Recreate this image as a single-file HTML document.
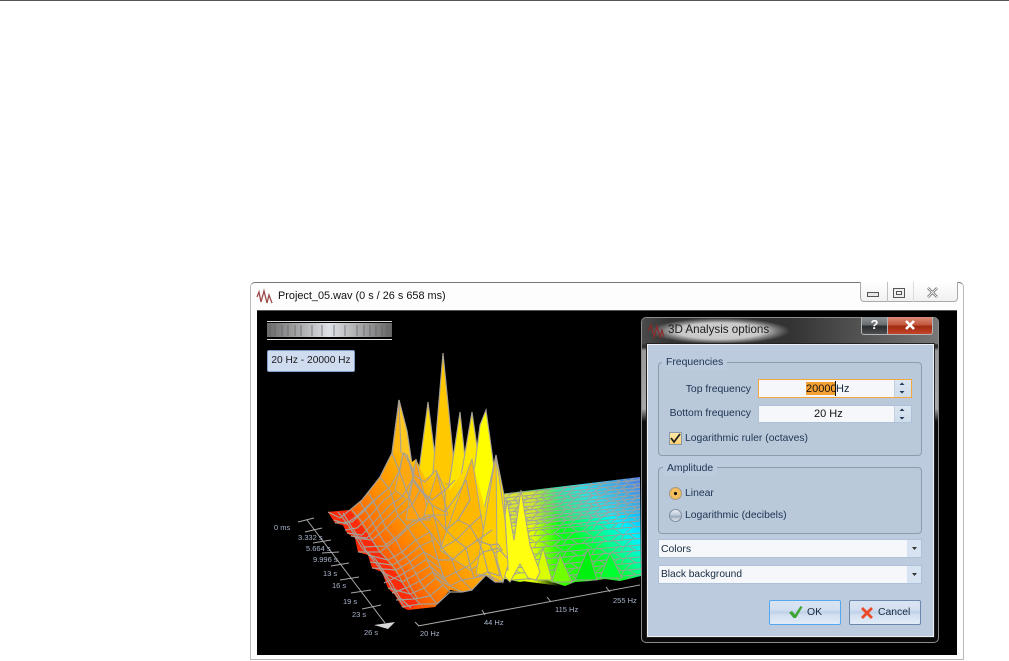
<!DOCTYPE html>
<html><head><meta charset="utf-8">
<style>
html,body{margin:0;padding:0;background:#fff;width:1009px;height:661px;overflow:hidden}
body{position:relative;font-family:"Liberation Sans",sans-serif;font-size:10.4px;color:#15283f}
div{position:absolute;box-sizing:border-box;white-space:nowrap}
.t{line-height:14px;height:14px}
.grp{border:1px solid #8c9cb0;border-radius:4px;background:#bac9da}
.lg{background:#bccbdd;padding:0 4px;color:#1c3350}
.inp{background:#f5f7fa;border:1px solid #afc1d8}
.spn{background:linear-gradient(#dbe6f2,#cfdcea);border-left:1px solid #c3d0e0}
.cmbb{background:#d7e3f0}
.btn{border-radius:2px;background:linear-gradient(#d9e4f3 0,#d4e0f0 35%,#bfd1e7 50%,#d2dff0 60%,#e3ecf8 100%)}
svg{position:absolute;left:0;top:0}
</style></head><body>
<div style="left:0;top:0;width:1009px;height:1px;background:#555"></div>

<!-- main window -->
<div style="left:250px;top:282px;width:714px;height:378px;background:#fdfdfe;border:1px solid #b9b9b9;border-top:1px solid #777;border-radius:5px 5px 0 0"></div>
<div style="left:257px;top:310px;width:700px;height:345px;background:#000;border-top:1px solid #555"></div>
<div class="t" style="left:278px;top:289px;font-size:10.9px;color:#111">Project_05.wav (0 s / 26 s 658 ms)</div>

<!-- caption buttons -->
<div style="left:860px;top:282px;width:98px;height:20px;background:linear-gradient(#fff,#f1f1f1);border:1px solid #a9a9a9;border-top:0;border-radius:0 0 4px 4px"></div>
<div style="left:887px;top:282px;width:1px;height:20px;background:#c0c0c0"></div>
<div style="left:913px;top:282px;width:1px;height:20px;background:#dcdcdc"></div>
<div style="left:867px;top:292px;width:12px;height:5px;border:1px solid #555;background:#e8e8e8"></div>
<div style="left:893px;top:288px;width:12px;height:10px;border:1px solid #555;background:#eee"></div>
<div style="left:896px;top:291px;width:6px;height:4px;border:1px solid #555"></div>

<svg width="1009" height="661" viewBox="0 0 1009 661" style="z-index:1">
<defs>
<linearGradient id="body" gradientUnits="userSpaceOnUse" x1="358" y1="561" x2="470" y2="472">
<stop offset="0" stop-color="#ff2408"/><stop offset=".08" stop-color="#ff4000"/><stop offset=".24" stop-color="#ff7000"/><stop offset=".42" stop-color="#ff9000"/><stop offset=".6" stop-color="#ffa800"/><stop offset=".75" stop-color="#ffc000"/><stop offset="1" stop-color="#ffe000"/></linearGradient>
<linearGradient id="band" gradientUnits="userSpaceOnUse" x1="540" y1="590" x2="640" y2="480">
<stop offset="0" stop-color="#a0ff00"/><stop offset=".15" stop-color="#30ff00"/><stop offset=".42" stop-color="#00ff20"/><stop offset=".55" stop-color="#00ff90"/><stop offset=".7" stop-color="#00f0ff"/><stop offset="1" stop-color="#2a70ff"/></linearGradient>
<linearGradient id="bandY" gradientUnits="userSpaceOnUse" x1="495" y1="0" x2="560" y2="0">
<stop offset="0" stop-color="#ffff00"/><stop offset=".6" stop-color="#e0ff00"/><stop offset="1" stop-color="#a0ff00" stop-opacity="0"/></linearGradient>
<pattern id="mesh" width="27" height="11" patternUnits="userSpaceOnUse" patternTransform="skewY(-6)">
<path d="M0 1H27M0 4.500H27M0 8H27" stroke="#a0a09c" stroke-width="1.100"/>
<path d="M0 4.500L5 1M9 8L14 4.500M17 4.500L22 1M4 11L9 8M21 11L26 8M12 1L16 4.500M22 4.500L26 8M2 4.500L6 8" stroke="#a0a09c" stroke-width="1"/>
</pattern>
<pattern id="mesh2" width="29" height="12" patternUnits="userSpaceOnUse" patternTransform="skewY(-5)">
<path d="M0 1H29M0 6.500H29" stroke="#98a094" stroke-width="1"/>
<path d="M2 6.500L9 1M16 12L23 6.500M20 1L27 6.500M5 6.500L12 12M12 6.500L15 1" stroke="#98a094" stroke-width=".9"/>
</pattern>
<linearGradient id="rul" x1="0" x2="1" y1="0" y2="0">
<stop offset="0" stop-color="#6a6a6a"/><stop offset=".2" stop-color="#9a9a9a"/><stop offset=".5" stop-color="#dfe2e8"/><stop offset=".8" stop-color="#9a9a9a"/><stop offset="1" stop-color="#646464"/></linearGradient>
</defs>

<!-- logo -->
<polyline points="257,297 259,292 261,302 264,291 267,303 269,295 272,303" fill="none" stroke="#9c4a4a" stroke-width="1.3"/>

<!-- caption X -->
<path d="M928 288l9 9m0-9l-9 9" stroke="#666" stroke-width="2.6"/>
<path d="M928 288l9 9m0-9l-9 9" stroke="#f4f4f4" stroke-width="1"/>

<!-- ruler -->
<rect x="267" y="321" width="125" height="19" fill="#000"/>
<rect x="267" y="321" width="125" height="1" fill="#ddd"/>
<rect x="267" y="339" width="125" height="1" fill="#ddd"/>
<rect x="267" y="323" width="125" height="14" fill="url(#rul)"/>
<path d="M270 325v11M275 325v11M282 325v11M288 325v11M295 325v11M301 325v11M312 325v11M322 325v11M334 325v11M345 325v11M357 325v11M364 325v11M370 325v11M376 325v11M382 325v11M387 325v11" stroke="#5c6066" stroke-width="1.2" opacity=".6"/>

<!-- axes -->
<g stroke="#a8a8a8" stroke-width="1" fill="none">
<path d="M307 520L385 623"/>
<path d="M298 522L314 518M305 532L322 528M313 543L331 540M322 553L339 552M331 566L349 563M340 580L359 577M351 593L371 590M362 609L381 605"/>
<path d="M418 626L640 585M415 622L419 626M482 610L485 615M547 597L551 602M606 587L610 592"/>
</g>
<polygon points="374,625 395,622 388,629" fill="#d8d8d8"/>
<g font-family="Liberation Sans,sans-serif" font-size="7.5" fill="#a9b6cc">
<text x="274" y="530">0 ms</text><text x="298" y="540">3.332 s</text><text x="306" y="551">5.664 s</text><text x="313" y="562">9.996 s</text><text x="323" y="576">13 s</text><text x="332" y="588">16 s</text><text x="343" y="604">19 s</text><text x="352" y="617">23 s</text><text x="364" y="635">26 s</text>
<text x="420" y="636">20 Hz</text><text x="484" y="625">44 Hz</text><text x="555" y="612">115 Hz</text><text x="613" y="603">255 Hz</text>
</g>

<!-- green band -->
<polygon points="500,494 640,477 641,576 620,581 605,579 590,581 575,582 565,586 552,582 540,578 520,582 500,578" fill="url(#band)"/>
<polygon points="500,494 560,488 560,586 500,578" fill="url(#bandY)"/>
<polygon points="500,494 640,477 640,512 500,528" fill="#a8a8a4" opacity=".3"/>
<polygon points="500,494 640,477 640,520 500,532" fill="url(#mesh)"/>
<polygon points="500,532 640,520 641,576 620,581 605,579 590,581 575,582 565,586 552,582 540,578 520,582 500,578" fill="url(#mesh2)"/>
<g stroke="#9aa090" stroke-width=".9">
<polygon points="575,580 588,549 597,580" fill="#00f010"/>
<polygon points="534,580 543,548 552,580" fill="#d8ff00"/>
<polygon points="552,582 560,555 572,582" fill="#70ff00"/>
<polygon points="600,578 610,553 622,578" fill="#00ff30"/>
</g>

<!-- far yellow peaks -->
<g stroke="#a59f90" stroke-width="1">
<polygon points="498,570 507,500 514,540 521,490 530,545 540,572 536,580 528,578 520,564 510,582" fill="#ffff10"/>
</g>

<!-- backing between peaks -->
<polygon points="412,478 425,472 450,482 470,492 500,502 506,560 480,560 420,520" fill="#ffc400"/>

<!-- back peaks -->
<g stroke="#a8a296" stroke-width="1.1">
<polygon points="380,480 392,453 399,400 407,431 414,478 400,495" fill="#ffb612"/>
<polygon points="399,400 407,431 414,478 402,478" fill="#ffc820"/>
<polygon points="418,478 428,402 438,480" fill="#ffdc00"/>
<polygon points="432,484 443,353 456,484" fill="#ffc800"/>
<polygon points="448,492 460,412 468,486" fill="#ffe600"/>
<polygon points="458,494 472,412 484,495" fill="#ffe800"/>
<polygon points="470,504 480,425 486,410 500,510" fill="#ffff00"/>
<polygon points="484,510 496,455 504,495 508,570 488,570" fill="#ffd800"/>
</g>

<!-- body -->
<polygon points="328,512 350,510 362,500 380,477 392,453 403,453 412,462 416,459 425,478 437,473 450,490 472,459 484,505 490,520 496,455 503,494 508,560 503,582 496,582 486,576 472,590 462,592 450,590 435,607 408,610 402,607 395,595 388,588 382,572 372,568 368,555 358,552 355,538 347,533 343,525 335,523" fill="url(#body)"/>
<!-- front amber peaks -->
<g stroke="#a8a296" stroke-width="1">
<polygon points="440,550 472,459 488,560 470,570" fill="#ffb800"/>
<polygon points="476,574 496,455 505,575 503,582 490,576" fill="#ffcc00"/>
<polygon points="406,520 416,459 430,520" fill="#ffa010"/>
<polygon points="424,515 437,473 448,515" fill="#ffb000"/>
<polygon points="395,490 403,453 414,470 408,500" fill="#ffa810"/>
</g>
<polygon points="496,455 505,520 508,565 503,582 497,560" fill="#ffe400" stroke="#a8a296"/>

<!-- red left-edge strip -->
<polygon points="328,512 350,510 358,520 375,545 395,572 420,604 408,610 402,607 395,595 388,588 382,572 372,568 368,555 358,552 355,538 347,533 343,525 335,523" fill="#ff2a08"/>

<!-- mesh -->
<g fill="none" stroke="#a69f94" stroke-width="1.2" stroke-linejoin="round">
<polyline points="328,512 340,518 350,510 362,500 380,477 392,453 399,400"/>
<polyline points="335,523 352,522 365,510 378,497 390,487 400,470 403,453 407,455 414,475 425,482 436,470"/>
<polyline points="347,533 362,535 376,520 390,505 402,497 412,480 420,490 432,500 445,490 455,480"/>
<polyline points="355,538 372,540 386,528 398,516 412,505 420,490 432,505 445,512 456,497 466,480"/>
<polyline points="358,552 380,552 396,540 408,528 420,520 434,516 446,530 458,520 470,500"/>
<polyline points="368,555 388,560 402,552 416,540 430,532 442,548 456,540 470,526 482,515"/>
<polyline points="372,568 396,570 410,562 424,552 438,560 452,560 466,548 478,540 492,530"/>
<polyline points="382,572 402,582 416,574 430,566 444,578 456,572 470,565 483,552 498,548 507,558"/>
<polyline points="388,588 410,594 424,588 436,578 450,586 462,580 474,578 488,572 500,576"/>
<polyline points="402,607 420,604 437,604 450,592 462,592 472,590 486,575 495,582 503,582"/>
<polyline points="334,520 346,524 358,515 372,502 384,492"/>
<polyline points="345,530 357,528 370,516 384,500 395,492"/>
<polyline points="351,536 367,538 380,524 394,511 406,500"/>
<polyline points="363,547 384,546 400,534 412,522 426,516"/>
<polyline points="370,562 392,565 406,557 420,546 434,540"/>
<polyline points="392,593 406,588 420,581 433,572 447,582"/>
<polyline points="384,583 399,576 413,568 427,559 441,569"/>
<polyline points="396,600 415,599 430,596 443,585"/>
<polyline points="352,510 362,522 372,540 380,552 388,560 396,570 402,582 410,594 420,604"/>
<polyline points="368,492 376,506 386,528 396,540 402,552 410,562 416,574 424,588 437,604"/>
<polyline points="380,477 390,490 398,516 408,528 416,540 424,552 430,566 436,578 450,592"/>
<polyline points="392,453 402,478 412,505 420,520 430,532 438,560 444,578 450,586 462,592"/>
<polyline points="407,455 414,480 432,505 434,516 442,548 452,560 456,572 462,580 472,590"/>
<polyline points="436,470 445,490 445,512 446,530 456,540 466,548 470,565 474,578 486,575"/>
<polyline points="466,480 470,500 458,520 470,526 478,540 483,552 488,572 495,582"/>
<polyline points="338,512 346,522 354,534 362,548 370,556 378,566 386,578 394,592 404,606"/>
<polyline points="360,502 369,516 379,534 388,548 395,558 403,570 409,584 417,598"/>
<polyline points="343,513 351,526 359,538 367,552 376,560 384,572 392,584 400,598 411,608"/>
<polyline points="490,545 498,544 502,550 494,553 490,545"/>
<polyline points="476,540 490,545 494,553 500,576"/>
</g>

</svg>

<div style="left:267px;top:350px;width:88px;height:22px;background:#cfdcf0;border:1px solid #7f9cc4;border-radius:2px;z-index:2;line-height:20px;text-align:center;font-size:10.2px;color:#1a1a1a">20 Hz - 20000 Hz</div>

<!-- dialog -->
<div style="left:641px;top:317px;width:298px;height:326px;z-index:3;border:1px solid #8c8c8c;border-radius:5px;background:linear-gradient(#8a8a8a 0,#3e3e3e 8%,#2a2a2a 9%,#999 10%,#a8a8a8 28%,#0c0c0c 32%,#0a0a0a 100%)"></div>
<div style="left:642px;top:318px;width:296px;height:26px;z-index:3;border-radius:4px 4px 0 0;background:linear-gradient(90deg,#4a4a4a 0,#333 10%,#333 50%,#555 75%,#777 100%)"></div>
<div style="left:650px;top:318px;width:140px;height:26px;z-index:3;background:radial-gradient(ellipse closest-side,#d4d4d4 0,#c8c8c8 62%,rgba(150,150,150,.55) 85%,rgba(120,120,120,0) 100%)"></div>
<div class="t" style="left:668px;top:323px;z-index:4;font-size:11.6px;color:#1c1c1c">3D Analysis options</div>
<div style="left:861px;top:317px;width:27px;height:18px;z-index:4;background:linear-gradient(#8f9496,#6a6e70 45%,#2a2c2e 55%,#4c5052);border:1px solid #b5b5b5;border-top:0;border-radius:0 0 0 3px;color:#fff;font-weight:bold;font-size:13px;line-height:16px;text-align:center">?</div>
<div style="left:888px;top:317px;width:45px;height:18px;z-index:4;background:linear-gradient(#d88a78,#c4583f 45%,#a02a10 55%,#c4452a);border:1px solid #b5b5b5;border-top:0;border-left:0;border-radius:0 0 3px 0"></div>
<div style="left:647px;top:344px;width:287px;height:293px;z-index:3;background:#bccbdd;border:1px solid #eef2f6;outline:1px solid #222"></div>

<!-- groups -->
<div class="grp" style="left:658px;top:362px;width:264px;height:94px;z-index:4"></div>
<div class="t lg" style="left:662px;top:356px;z-index:4">Frequencies</div>
<div class="t" style="left:675px;top:383px;z-index:5;width:76px;text-align:right;color:#1c3350">Top frequency</div>
<div class="inp" style="left:758px;top:379px;width:154px;height:19px;z-index:5;border-color:#f3a73c"></div>
<div style="left:806px;top:382px;width:30px;height:13px;background:#f5a033;z-index:5"></div>
<div style="left:835px;top:381px;width:1px;height:15px;background:#111;z-index:6"></div>
<div class="t" style="left:806px;top:382px;z-index:6;color:#111;font-size:11px">20000</div>
<div class="t" style="left:836px;top:382px;z-index:6;color:#15283f;font-size:11px">Hz</div>
<div class="spn" style="left:894px;top:380px;width:17px;height:17px;z-index:6"></div>
<div class="t" style="left:660px;top:407px;z-index:5;width:91px;text-align:right;color:#1c3350">Bottom frequency</div>
<div class="inp" style="left:758px;top:405px;width:154px;height:18px;z-index:5"></div>
<div class="t" style="left:814px;top:407px;z-index:6;color:#111;font-size:11px">20 Hz</div>
<div class="spn" style="left:894px;top:406px;width:17px;height:16px;z-index:6"></div>
<div style="left:669px;top:432px;width:13px;height:13px;z-index:5;background:linear-gradient(#ffe9a8,#fcd070);border:1px solid #8a98a8"></div>
<div class="t" style="left:685px;top:432px;z-index:5;color:#1c3350">Logarithmic ruler (octaves)</div>

<div class="grp" style="left:658px;top:467px;width:264px;height:67px;z-index:4"></div>
<div class="t lg" style="left:663px;top:462px;z-index:4">Amplitude</div>
<div style="left:669px;top:487px;width:13px;height:13px;border-radius:50%;z-index:5;background:radial-gradient(circle,#111 0,#111 18%,#f7c462 24%,#f0b858 70%,#b9a070 100%);border:1px solid #a49a88"></div>
<div class="t" style="left:685px;top:487px;z-index:5;color:#1c3350">Linear</div>
<div style="left:669px;top:509px;width:13px;height:13px;border-radius:50%;z-index:5;background:linear-gradient(#e8eef5,#b9c6d6 50%,#98a8bc 55%,#dfe6ef);border:1px solid #7f8da0"></div>
<div class="t" style="left:685px;top:509px;z-index:5;color:#1c3350">Logarithmic (decibels)</div>

<div class="inp" style="left:658px;top:539px;width:264px;height:19px;z-index:5"></div>
<div class="cmbb" style="left:907px;top:540px;width:14px;height:17px;z-index:6"></div>
<div class="t" style="left:661px;top:543px;z-index:6;color:#15283f">Colors</div>
<div class="inp" style="left:658px;top:565px;width:264px;height:19px;z-index:5"></div>
<div class="cmbb" style="left:907px;top:566px;width:14px;height:17px;z-index:6"></div>
<div class="t" style="left:661px;top:568px;z-index:6;color:#15283f;font-size:10.2px">Black background</div>

<div class="btn" style="left:769px;top:600px;width:72px;height:25px;z-index:5;border:1px solid #55a8ee"></div>
<div class="t" style="left:807px;top:606px;z-index:6;color:#15283f">OK</div>
<div class="btn" style="left:849px;top:600px;width:72px;height:25px;z-index:5;border:1px solid #6c88ac"></div>
<div class="t" style="left:878px;top:606px;z-index:6;color:#15283f">Cancel</div>

<svg width="1009" height="661" viewBox="0 0 1009 661" style="z-index:7;pointer-events:none">
<polyline points="648,331 651,325 654,337 657,326 660,337 662,330 664,337" fill="none" stroke="#8c2a2a" stroke-width="1.2"/>
<path d="M906 321l8 8m0-8l-8 8" stroke="#fff" stroke-width="2.6"/>
<path d="M671 438l3 4 6-8" fill="none" stroke="#222" stroke-width="1.8"/>
<path d="M899.500 385l2.500-2.500 2.500 2.500zM899.500 391h5l-2.500 2.500zM899.500 411l2.500-2.500 2.500 2.500zM899.500 417h5l-2.500 2.500z" fill="#1f3550"/>
<path d="M912 547h5l-2.500 3zM912 573h5l-2.500 3z" fill="#333"/>
<path d="M789 612.500l3-1.500 3 3.500 5.500-8.500 2 1-6.500 11h-2.500z" fill="#3fa535"/>
<path d="M862 608l10 10M872 608l-10 10" stroke="#ec4a26" stroke-width="2.8"/>
</svg>
</body></html>
